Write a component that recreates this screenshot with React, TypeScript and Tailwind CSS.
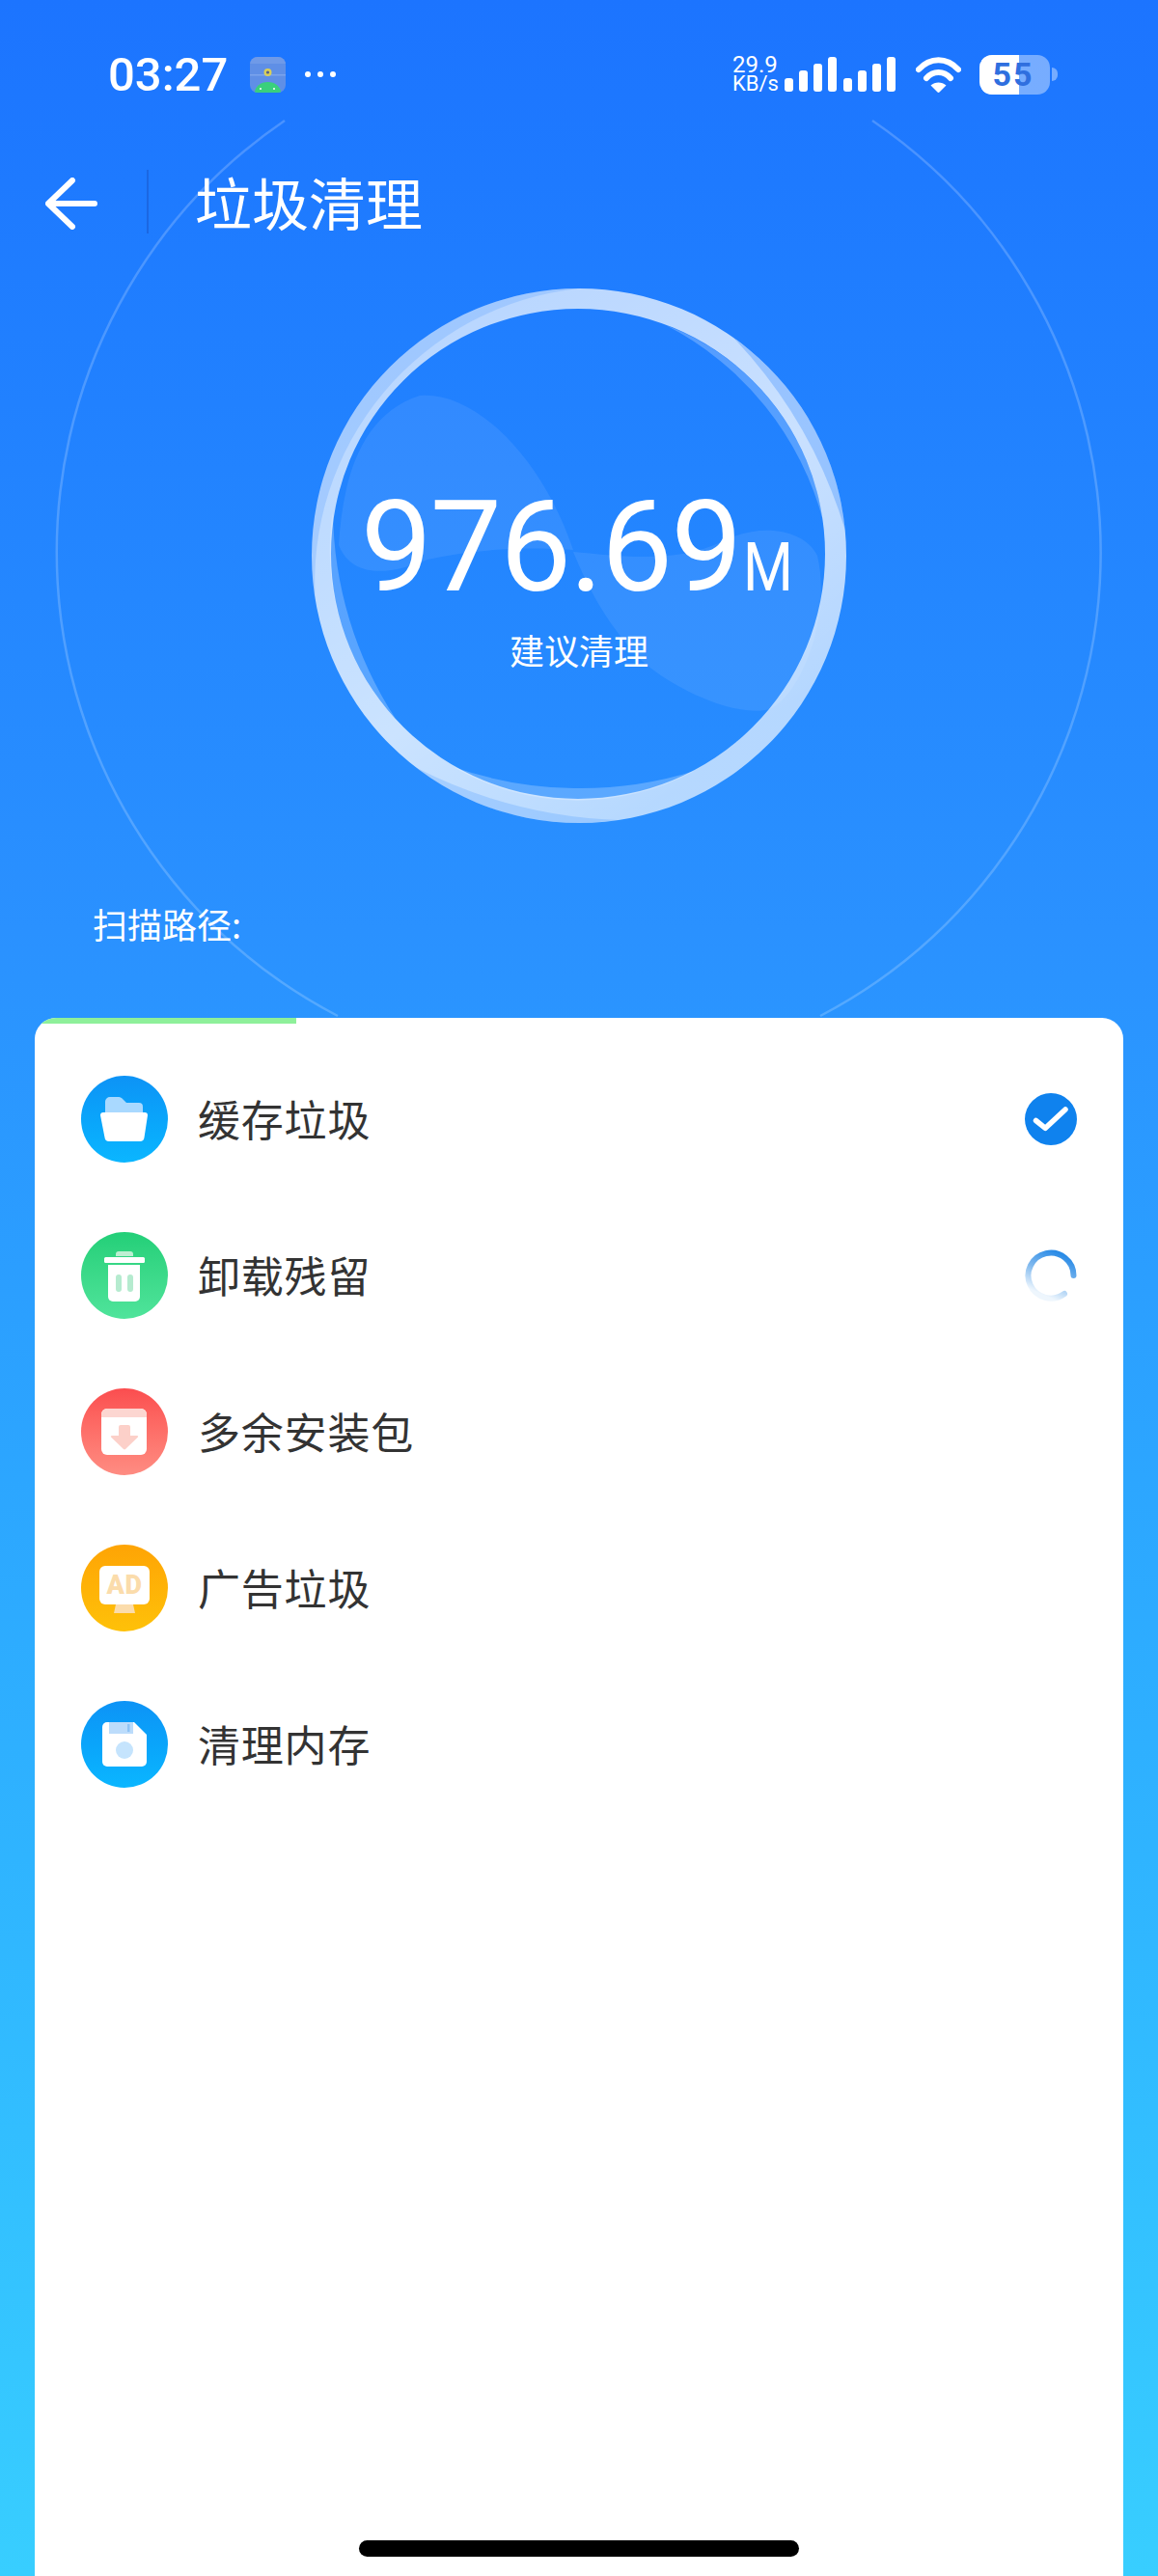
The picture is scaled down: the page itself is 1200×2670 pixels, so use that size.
import React from "react";

const cjk = "font-['Noto_Sans_CJK_SC','Noto_Sans',sans-serif]";
const num = "font-['Roboto','Noto_Sans',sans-serif]";

function AppBadge() {
  return (
    <svg width="37" height="37" viewBox="0 0 37 37">
      <defs>
        <clipPath id="badge">
          <rect width="37" height="37" rx="8" />
        </clipPath>
      </defs>
      <g clipPath="url(#badge)">
        <rect width="37" height="37" fill="#5f8fe6" />
        <rect width="37" height="7" fill="#6f9ae8" />
        <rect y="18" width="37" height="1.5" fill="#7ba4ec" />
        <path d="M5 37a13.5 11 0 0 1 27 0z" fill="#3ad07c" />
        <circle cx="18.5" cy="16" r="4" fill="#d8cf5a" />
        <circle cx="18.5" cy="16" r="1.6" fill="#56608c" />
        <circle cx="11" cy="33" r="1" fill="#fff" />
        <circle cx="25" cy="33" r="1" fill="#fff" />
      </g>
    </svg>
  );
}

function SignalBars() {
  const heights = [14, 22, 29, 36];
  return (
    <div className="flex gap-[7px]">
      {[0, 1].map((group) => (
        <div key={group} className="flex items-end gap-[6px]">
          {heights.map((h) => (
            <div key={h} className="w-[9px] rounded-[3px] bg-white" style={{ height: h }} />
          ))}
        </div>
      ))}
    </div>
  );
}

function Wifi() {
  return (
    <svg width="47" height="37" viewBox="0 0 47 37" fill="none" stroke="#fff" strokeWidth="6" strokeLinecap="round">
      <path d="M3 13C15 0 32 0 44 13" />
      <path d="M11 22C18 14 29 14 36 22" />
      <path d="M15.5 29.5C20 25.5 27 25.5 31.5 29.5L24.5 36.5C24 37 23 37 22.5 36.5Z" fill="#fff" stroke="none" />
    </svg>
  );
}

function Battery() {
  return (
    <div className="flex items-center">
      <div className="relative flex h-[41px] w-[73px] overflow-hidden rounded-[13px] bg-white/40">
        <div className="h-full w-[41px] bg-white" />
        <span className={`${num} absolute inset-0 flex items-center justify-center pr-[3px] text-[34px] leading-none font-bold tracking-[2px] text-[#2f6fdf]`}>
          55
        </span>
      </div>
      <div className="ml-[2px] h-[14px] w-[6px] rounded-r-full bg-white/40" />
    </div>
  );
}

function StatusBar() {
  return (
    <div className="flex h-[130px] items-center justify-between pt-[24px] pr-[104px] pl-[112px] text-white">
      <div className="flex items-center">
        <span className={`${num} text-[49px] leading-none font-medium`}>03:27</span>
        <div className="ml-[23px] flex">
          <AppBadge />
        </div>
        <div className="ml-[20px] flex gap-[7px]">
          <div className="h-[6px] w-[6px] rounded-full bg-white" />
          <div className="h-[6px] w-[6px] rounded-full bg-white" />
          <div className="h-[6px] w-[6px] rounded-full bg-white" />
        </div>
      </div>
      <div className="flex items-center">
        <div className={`${num} w-[48px] leading-[19px]`}>
          <div className="text-[24px]">29.9</div>
          <div className="text-[22px]">KB/s</div>
        </div>
        <div className="ml-[6px]">
          <SignalBars />
        </div>
        <div className="ml-[21px] flex">
          <Wifi />
        </div>
        <div className="ml-[19px]">
          <Battery />
        </div>
      </div>
    </div>
  );
}

function Header() {
  return (
    <div className="flex h-[150px] items-center pt-[12px] pl-[47px]">
      <svg width="54" height="54" viewBox="0 0 54 54" fill="none" stroke="#fff" strokeWidth="6" strokeLinecap="round" strokeLinejoin="round">
        <path d="M28 3L3 27L28 51M3 27H51" />
      </svg>
      <div className="mb-[4px] ml-[51px] h-[66px] w-[2px] bg-[#1a5fd6]/70" />
      <h1 className={`${cjk} mb-[6px] ml-[48px] text-[59px] leading-none font-normal text-white`}>垃圾清理</h1>
    </div>
  );
}

function Gauge() {
  return (
    <div className="relative mx-auto flex h-[600px] w-[600px] flex-col items-center pt-[222px] text-white">
      <svg className="absolute inset-0" width="600" height="600" viewBox="300 280 600 600">
        <defs>
          <linearGradient id="ringMain" x1="0" y1="0.2" x2="0.6" y2="1">
            <stop offset="0" stopColor="#fff" stopOpacity="0.68" />
            <stop offset="0.6" stopColor="#fff" stopOpacity="0.76" />
            <stop offset="1" stopColor="#fff" stopOpacity="0.66" />
          </linearGradient>
        </defs>
        {/* soft wave shapes inside the dial */}
        <path
          d="M351 565C355 500 372 430 435 410C490 405 560 470 594 570C540 566 490 570 443 580C405 596 365 600 351 565Z"
          fill="#fff"
          fillOpacity="0.08"
        />
        <path
          d="M594 572C640 576 700 585 749 561C790 540 835 550 847 576C862 640 830 720 798 735C760 745 690 710 660 680C625 640 610 610 594 572Z"
          fill="#fff"
          fillOpacity="0.08"
        />
        {/* main band of the dial */}
        <path
          fillRule="evenodd"
          fill="url(#ringMain)"
          d="M323 576a277 277 0 1 0 554 0a277 277 0 1 0 -554 0ZM343 574a256 254 0 1 1 512 0a256 254 0 1 1 -512 0Z"
        />
        {/* inner glass crescents along the hole of the band */}
        <g fill="#fff" fillOpacity="0.24">
          <path d="M690 337A255 255 0 0 1 853 540A320 320 0 0 0 690 337Z" />
          <path d="M345 530A256 256 0 0 0 410 745A400 400 0 0 1 345 530Z" />
          <path d="M470 795A256 256 0 0 0 720 799A400 400 0 0 1 470 795Z" />
        </g>
        {/* darker outer crescents where the band thins out */}
        <g fill="#2a86ff">
          <path d="M760 350A277 277 0 0 1 876 550A500 500 0 0 0 760 350Z" fillOpacity="0.3" />
          <path d="M430 795A277 277 0 0 0 640 850A500 500 0 0 1 430 795Z" fillOpacity="0.2" />
          <path d="M327 626A277 277 0 0 1 600 299A306 306 0 0 0 327 626Z" fillOpacity="0.18" />
        </g>
      </svg>
      <div className={`${num} relative flex h-[130px] items-baseline leading-[130px] font-normal`}>
        <span className="text-[132px] tracking-[-2px]">976.69</span>
        <span className="ml-[3px] inline-block w-[56px] origin-left scale-x-[0.85] text-[70px]">M</span>
      </div>
      <div className={`${cjk} relative mt-[16px] text-[36px] leading-[50px]`}>建议清理</div>
    </div>
  );
}

function FolderIcon() {
  return (
    <svg width="90" height="90" viewBox="0 0 90 90">
      <path d="M25 27a5 5 0 0 1 5-5h9c2 0 3 1 4 2l4 4h13a4 4 0 0 1 4 4v8H25z" fill="#a9d9ff" />
      <path d="M20 41a3 3 0 0 1 3-3h43a3 3 0 0 1 3 3l-3.500 23a4.500 4.500 0 0 1-4.500 4H29a4.500 4.500 0 0 1-4.500-4z" fill="#fff" />
    </svg>
  );
}

function TrashIcon() {
  return (
    <svg width="90" height="90" viewBox="0 0 90 90">
      <path d="M36 25v-2a3 3 0 0 1 3-3h12a3 3 0 0 1 3 3v2z" fill="#bdeed2" />
      <rect x="24" y="26" width="42" height="6" rx="1.500" fill="#fff" />
      <path d="M28 34h33v33a5 5 0 0 1-5 5H33a5 5 0 0 1-5-5z" fill="#fff" />
      <rect x="36" y="44" width="6" height="18" rx="3" fill="#b5ebcf" />
      <rect x="48" y="44" width="6" height="18" rx="3" fill="#b5ebcf" />
    </svg>
  );
}

function PackageIcon() {
  return (
    <svg width="90" height="90" viewBox="0 0 90 90">
      <rect x="21" y="21" width="47" height="48" rx="6" fill="#fff" />
      <path d="M21 30v-3a6 6 0 0 1 6-6h35a6 6 0 0 1 6 6v3z" fill="#fcd6d1" />
      <path d="M39 40a2 2 0 0 1 2-2h8a2 2 0 0 1 2 2v9h7c1 0 1.500 1 1 1.500L46 63c-.5.5-1.500.5-2 0L31 50.500c-.5-.5 0-1.500 1-1.500h7z" fill="#fcd0c9" />
    </svg>
  );
}

function AdIcon() {
  return (
    <svg width="90" height="90" viewBox="0 0 90 90">
      <path d="M36 62h18l2 9H34z" fill="#fbdcab" />
      <rect x="19" y="22" width="52" height="40" rx="6" fill="#fff" />
      <text x="45" y="51" textAnchor="middle" fontFamily="Roboto, sans-serif" fontWeight="900" fontSize="27" letterSpacing="0.5" fill="#fbdcab">
        AD
      </text>
    </svg>
  );
}

function SaveIcon() {
  return (
    <svg width="90" height="90" viewBox="0 0 90 90">
      <path d="M27 22h28l13 13v28a5 5 0 0 1-5 5H27a5 5 0 0 1-5-5V27a5 5 0 0 1 5-5z" fill="#fff" />
      <rect x="29" y="22" width="25" height="12" fill="#bcdcfb" />
      <rect x="48" y="24" width="2.500" height="8" fill="#8fc3f5" />
      <circle cx="45" cy="51" r="9" fill="#c5e4fd" />
    </svg>
  );
}

function DoneMark() {
  return (
    <svg width="54" height="54" viewBox="0 0 54 54">
      <circle cx="27" cy="27" r="27" fill="#0f82ee" />
      <path d="M11.500 28.500L21.300 36.300L42 17" fill="none" stroke="#fff" strokeWidth="5.500" strokeLinecap="round" strokeLinejoin="round" />
    </svg>
  );
}

function Spinner() {
  return (
    <svg width="54" height="54" viewBox="0 0 54 54" fill="none">
      <defs>
        <linearGradient id="spin" x1="0.9" y1="0.1" x2="0.5" y2="1">
          <stop offset="0" stopColor="#2a8be6" />
          <stop offset="0.5" stopColor="#7fb8ee" />
          <stop offset="1" stopColor="#eef6fd" />
        </linearGradient>
      </defs>
      <path d="M50.500 27A23.500 23.500 0 1 0 41 46" stroke="url(#spin)" strokeWidth="6" strokeLinecap="round" />
    </svg>
  );
}

type Task = { label: string; circle: string; icon: React.ReactNode; status?: React.ReactNode };

const tasks: Task[] = [
  { label: "缓存垃圾", circle: "from-[#0d93f6] to-[#0bb6ff]", icon: <FolderIcon />, status: <DoneMark /> },
  { label: "卸载残留", circle: "from-[#22cf78] to-[#4fe49b]", icon: <TrashIcon />, status: <Spinner /> },
  { label: "多余安装包", circle: "from-[#fb4d4f] to-[#fe8c82]", icon: <PackageIcon /> },
  { label: "广告垃圾", circle: "from-[#fea405] to-[#fec109]", icon: <AdIcon /> },
  { label: "清理内存", circle: "from-[#0d93f6] to-[#0bb6ff]", icon: <SaveIcon /> },
];

function TaskRow({ task }: { task: Task }) {
  return (
    <div className="flex h-[90px] items-center">
      <div className={`h-[90px] w-[90px] shrink-0 rounded-full bg-gradient-to-b ${task.circle}`}>{task.icon}</div>
      <span className={`${cjk} mb-[3px] ml-[31px] flex-1 text-[44px] leading-none tracking-[0.8px] text-[#333333]`}>{task.label}</span>
      {task.status && <div className="flex">{task.status}</div>}
    </div>
  );
}

export default function App() {
  return (
    <div className="relative flex h-[2670px] w-[1200px] flex-col overflow-hidden bg-gradient-to-b from-[#1c74ff] via-[#2a91ff] via-36% to-[#38ceff]">
      {/* thin halo behind the dial, open at the top */}
      <svg className="absolute inset-0" width="1200" height="2670" viewBox="0 0 1200 2670" fill="none" stroke="#fff" strokeOpacity="0.2" strokeWidth="2.500">
        <path d="M295 125A542 542 0 0 0 350 1053" />
        <path d="M904 125A542 542 0 0 1 850 1053" />
      </svg>
      <div className="relative flex flex-1 flex-col">
        <StatusBar />
        <Header />
        <Gauge />
        <div className={`${cjk} mt-[52px] pl-[96px] text-[36px] leading-[50px] text-white`}>扫描路径:</div>
        <div className="relative mx-[36px] mt-[73px] flex-1 overflow-hidden rounded-t-[22px] bg-white px-[48px] pt-[60px]">
          <div className="absolute top-0 left-0 h-[6px] w-[271px] bg-[#8ef09a]" />
          <div className="flex flex-col gap-[72px]">
            {tasks.map((task) => (
              <TaskRow key={task.label} task={task} />
            ))}
          </div>
        </div>
      </div>
      <div className="absolute bottom-[20px] left-[372px] h-[17px] w-[456px] rounded-full bg-black" />
    </div>
  );
}
